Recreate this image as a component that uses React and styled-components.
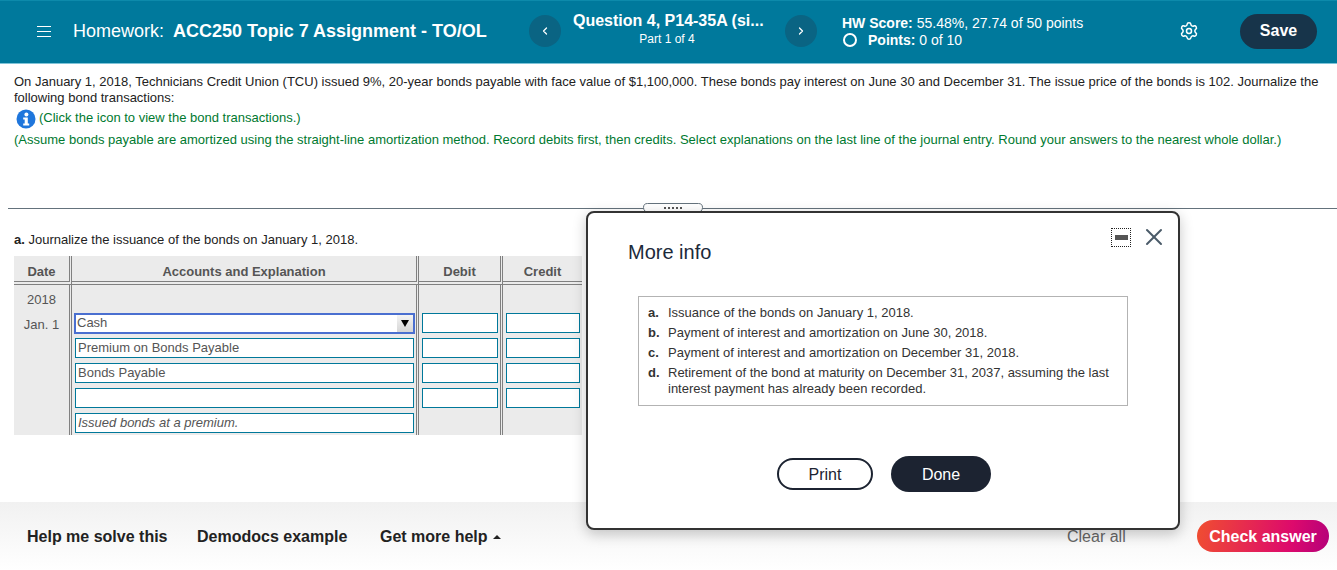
import React from "react";
import styled, { createGlobalStyle } from "styled-components";
import { Settings, X, ChevronLeft, ChevronRight } from "lucide-react";

const GlobalStyle = createGlobalStyle`
  html, body {
    margin: 0;
    padding: 0;
    background: #fff;
    font-family: "Liberation Sans", Arial, sans-serif;
    font-size: 13px;
    color: #222;
  }
`;

const Page = styled.div`
  position: relative;
  width: 1337px;
  height: 570px;
  overflow: hidden;
  display: flex;
  flex-direction: column;
`;

const Header = styled.header`
  flex: none;
  height: 60px;
  padding-bottom: 2px;
  border-top: 1px solid #0d8aab;
  border-bottom: 1px solid #7fc4d8;
  background: #00799c;
  color: #fff;
  display: flex;
  align-items: center;
`;

const Burger = styled.span`
  flex: none;
  width: 14px;
  height: 11px;
  margin-left: 37px;
  border-top: 1px solid #fff;
  border-bottom: 1px solid #fff;
  box-sizing: border-box;
  position: relative;
  &::after {
    content: "";
    position: absolute;
    left: 0;
    right: 0;
    top: 4px;
    height: 1px;
    background: #fff;
  }
`;

const Title = styled.div`
  flex: none;
  width: 456px;
  margin-left: 22px;
  font-size: 18px;
  white-space: nowrap;
  b {
    margin-left: 4px;
  }
`;

const RoundNav = styled.button`
  flex: none;
  width: 32px;
  height: 32px;
  padding: 0;
  border: 0;
  border-radius: 50%;
  background: #0a6483;
  color: #fff;
  display: flex;
  align-items: center;
  justify-content: center;
`;

const QuestionInfo = styled.div`
  flex: none;
  width: 224px;
  box-sizing: border-box;
  padding-right: 12px;
  text-align: center;
  margin-top: -5px;
  strong {
    display: block;
    width: 190px;
    margin: 0 auto 1px 12px;
    font-size: 16px;
    line-height: 20px;
    white-space: nowrap;
  }
  span {
    display: block;
    font-size: 12px;
    line-height: 14px;
  }
`;

const ScoreBlock = styled.div`
  flex: none;
  width: 337px;
  margin: 1px 0 0 25px;
  font-size: 14px;
  line-height: 18px;
`;

const ScoreLine = styled.div`
  margin-bottom: -1px;
`;

const PointsLine = styled.div`
  display: flex;
  align-items: center;
`;

const PointsRing = styled.span`
  flex: none;
  width: 14px;
  height: 14px;
  margin: 0 11px 0 1px;
  border: 2px solid #fff;
  border-radius: 50%;
  box-sizing: border-box;
`;

const GearButton = styled.span`
  flex: none;
  width: 20px;
  display: flex;
  justify-content: center;
`;

const SaveButton = styled.button`
  flex: none;
  margin-left: 41px;
  width: 77px;
  height: 35px;
  border: 0;
  border-radius: 18px;
  background: #17344a;
  color: #fff;
  font: bold 16px "Liberation Sans", Arial, sans-serif;
`;

const Question = styled.section`
  flex: none;
  height: 144px;
  padding: 10px 14px 0;
  box-sizing: border-box;
  font-size: 13px;
  line-height: 16px;
`;

const Statement = styled.p`
  margin: 0;
  width: 1310px;
`;

const Hint = styled.div`
  display: flex;
  align-items: center;
  height: 18px;
  margin-top: 3px;
  color: #00792f;
  svg {
    margin: 1px 3px 0 2px;
    flex: none;
  }
`;

const Assume = styled.p`
  margin: 5px 0 0;
  color: #00792f;
  letter-spacing: 0.01px;
  white-space: nowrap;
`;

const Divider = styled.div`
  flex: none;
  height: 1px;
  margin-left: 8px;
  background: #64727c;
`;

const Handle = styled.div`
  position: absolute;
  left: 643px;
  top: 203px;
  width: 60px;
  height: 10px;
  box-sizing: border-box;
  border: 1px solid #64727c;
  border-radius: 5px 5px 6px 6px;
  background: #fff;
  display: flex;
  align-items: center;
  justify-content: center;
  gap: 2px;
  i {
    width: 2px;
    height: 2px;
    background: #555;
  }
`;

const Work = styled.section`
  flex: 1;
  padding: 23px 14px 0;
`;

const PartLabel = styled.p`
  margin: 0 0 8px;
  line-height: 16px;
  color: #222;
`;

const Journal = styled.table`
  width: 568px;
  table-layout: fixed;
  border-collapse: separate;
  border-spacing: 0;
  background: #ebebeb;
  color: #555;
`;

const HeadCell = styled.th`
  height: 20px;
  padding: 5px 0 0;
  font-size: 13px;
  font-weight: bold;
  color: #555;
  text-align: center;
  border-bottom: 4px double #808080;
  border-right: ${(p) => (p.$last ? "0" : "3px double #808080")};
`;

const Cell = styled.td`
  height: ${(p) => p.$h || 25}px;
  padding: 0;
  box-sizing: border-box;
  vertical-align: top;
  border-right: ${(p) => (p.$last ? "0" : "3px double #808080")};
`;

const DateText = styled.div`
  padding-top: ${(p) => p.$top}px;
  line-height: 16px;
  text-align: center;
  color: #555;
`;

const Field = styled.div`
  height: 20px;
  box-sizing: border-box;
  margin: 2px 2px 0 ${(p) => p.$left}px;
  width: ${(p) => p.$w}px;
  border: 1px solid #00789a;
  background: #fff;
  padding-left: 2px;
  line-height: 17px;
  font-size: 13px;
  color: #555;
  font-style: ${(p) => (p.$note ? "italic" : "normal")};
  white-space: nowrap;
`;

const SelectField = styled.div`
  height: 21px;
  width: 341px;
  margin: 2px 0 0 2px;
  box-sizing: border-box;
  border: 2px solid #4a6fd0;
  background: #fff;
  padding-left: 1px;
  line-height: 16px;
  color: #555;
  display: flex;
  justify-content: space-between;
`;

const SelectArrow = styled.span`
  width: 16px;
  height: 17px;
  background: linear-gradient(#f4f4f4, #d6d6d6);
  display: flex;
  align-items: center;
  justify-content: center;
  &::after {
    content: "";
    border-left: 4px solid transparent;
    border-right: 4px solid transparent;
    border-top: 7px solid #000;
  }
`;

const Footer = styled.footer`
  flex: none;
  height: 68px;
  background: linear-gradient(#f1f1f1, #fff);
  display: flex;
  align-items: center;
  font-size: 16px;
  font-weight: bold;
  color: #222;
`;

const FooterLink = styled.span`
  flex: none;
  width: ${(p) => p.$w}px;
  margin: 2px 0 0 ${(p) => p.$ml || 0}px;
  display: flex;
  align-items: center;
  white-space: nowrap;
`;

const Caret = styled.span`
  margin-left: 5px;
  border-left: 4px solid transparent;
  border-right: 4px solid transparent;
  border-bottom: 4px solid #222;
`;

const ClearAll = styled.span`
  flex: none;
  width: 130px;
  margin: 2px 0 0 567px;
  font-weight: normal;
  color: #666;
`;

const CheckAnswer = styled.button`
  flex: none;
  width: 132px;
  height: 32px;
  padding: 1px 0 0;
  border: 0;
  border-radius: 16px;
  background: linear-gradient(100deg, #f04e30, #dd0a6c 70%, #b4007a);
  color: #fff;
  font: bold 16px "Liberation Sans", Arial, sans-serif;
`;

const Modal = styled.div`
  position: absolute;
  left: 586px;
  top: 211px;
  width: 594px;
  height: 319px;
  box-sizing: border-box;
  padding: 27px 40px 0;
  background: #fff;
  border: 2px solid #333;
  border-radius: 8px;
  box-shadow: 0 4px 14px rgba(0, 0, 0, 0.22);
`;

const ModalTitle = styled.h2`
  margin: 0 0 32px;
  font-size: 20px;
  line-height: 24px;
  font-weight: normal;
  color: #1c2a3a;
`;

const ModalControls = styled.div`
  position: absolute;
  top: 10px;
  right: 10px;
  display: flex;
  align-items: center;
  gap: 9px;
  color: #4a5a68;
`;

const Minimize = styled.span`
  width: 20px;
  height: 19px;
  box-sizing: border-box;
  border: 1px dotted #222;
  display: flex;
  align-items: center;
  justify-content: center;
  &::after {
    content: "";
    width: 13px;
    height: 5px;
    background: #555;
  }
`;

const InfoBox = styled.ol`
  list-style: none;
  margin: 0 0 0 10px;
  width: 490px;
  height: 110px;
  box-sizing: border-box;
  padding: 8px 9px 0;
  border: 1px solid #b3b3b3;
  font-size: 13px;
  line-height: 16px;
  color: #333;
`;

const InfoItem = styled.li`
  display: flex;
  margin-bottom: 4px;
  b {
    flex: none;
    width: 20px;
  }
`;

const ModalActions = styled.div`
  display: flex;
  align-items: center;
  gap: 18px;
  margin: 50px 0 0 149px;
`;

const PrintButton = styled.button`
  width: 96px;
  height: 32px;
  padding: 1px 0 0;
  border: 2px solid #1c2331;
  border-radius: 16px;
  background: #fff;
  color: #1c2331;
  font: 16px "Liberation Sans", Arial, sans-serif;
`;

const DoneButton = styled.button`
  width: 100px;
  height: 36px;
  padding: 1px 0 0;
  border: 0;
  border-radius: 18px;
  background: #1c2331;
  color: #fff;
  font: 16px "Liberation Sans", Arial, sans-serif;
`;

const InfoIcon = () => (
  <svg width="20" height="20" viewBox="0 0 20 20" aria-hidden="true">
    <circle cx="10" cy="10" r="9.5" fill="#1f76dc" />
    <circle cx="10.4" cy="5.4" r="2" fill="#fff" />
    <path d="M7.2 8.6h4.6v6h1.4v1.9H7.2v-1.9h1.5v-4.1H7.2z" fill="#fff" />
  </svg>
);

const rows = [
  { id: "premium", text: "Premium on Bonds Payable" },
  { id: "bonds", text: "Bonds Payable" },
  { id: "blank", text: "" },
];

const items = [
  ["a.", "Issuance of the bonds on January 1, 2018."],
  ["b.", "Payment of interest and amortization on June 30, 2018."],
  ["c.", "Payment of interest and amortization on December 31, 2018."],
  ["d.", "Retirement of the bond at maturity on December 31, 2037, assuming the last interest payment has already been recorded."],
];

export default function App() {
  return (
    <Page>
      <GlobalStyle />
      <Header>
        <Burger />
        <Title>
          Homework: <b>ACC250 Topic 7 Assignment - TO/OL</b>
        </Title>
        <RoundNav>
          <ChevronLeft size={12} strokeWidth={2.5} />
        </RoundNav>
        <QuestionInfo>
          <strong>Question 4, P14-35A (si...</strong>
          <span>Part 1 of 4</span>
        </QuestionInfo>
        <RoundNav>
          <ChevronRight size={12} strokeWidth={2.5} />
        </RoundNav>
        <ScoreBlock>
          <ScoreLine>
            <b>HW Score:</b> 55.48%, 27.74 of 50 points
          </ScoreLine>
          <PointsLine>
            <PointsRing />
            <span>
              <b>Points:</b> 0 of 10
            </span>
          </PointsLine>
        </ScoreBlock>
        <GearButton>
          <Settings size={20} strokeWidth={1.8} />
        </GearButton>
        <SaveButton>Save</SaveButton>
      </Header>

      <Question>
        <Statement>
          On January 1, 2018, Technicians Credit Union (TCU) issued 9%, 20-year bonds payable with face value of
          $1,100,000. These bonds pay interest on June 30 and December 31. The issue price of the bonds is 102. Journalize
          the following bond transactions:
        </Statement>
        <Hint>
          <InfoIcon />
          (Click the icon to view the bond transactions.)
        </Hint>
        <Assume>
          (Assume bonds payable are amortized using the straight-line amortization method. Record debits first, then
          credits. Select explanations on the last line of the journal entry. Round your answers to the nearest whole
          dollar.)
        </Assume>
      </Question>

      <Divider />
      <Handle>
        <i />
        <i />
        <i />
        <i />
        <i />
      </Handle>

      <Work>
        <PartLabel>
          <b>a.</b> Journalize the issuance of the bonds on January 1, 2018.
        </PartLabel>
        <Journal>
          <colgroup>
            <col width="58" />
            <col width="347" />
            <col width="84" />
            <col width="79" />
          </colgroup>
          <thead>
            <tr>
              <HeadCell>Date</HeadCell>
              <HeadCell>Accounts and Explanation</HeadCell>
              <HeadCell>Debit</HeadCell>
              <HeadCell $last>Credit</HeadCell>
            </tr>
          </thead>
          <tbody>
            <tr>
              <Cell $h={26}>
                <DateText $top={7}>2018</DateText>
              </Cell>
              <Cell $h={26} />
              <Cell $h={26} />
              <Cell $h={26} $last />
            </tr>
            <tr>
              <Cell>
                <DateText $top={6}>Jan. 1</DateText>
              </Cell>
              <Cell>
                <SelectField>
                  Cash
                  <SelectArrow />
                </SelectField>
              </Cell>
              <Cell>
                <Field $left={3} $w={76} />
              </Cell>
              <Cell $last>
                <Field $left={3} $w={74} />
              </Cell>
            </tr>
            {rows.map((row) => (
              <tr key={row.id}>
                <Cell />
                <Cell>
                  <Field $left={3} $w={339}>
                    {row.text}
                  </Field>
                </Cell>
                <Cell>
                  <Field $left={3} $w={76} />
                </Cell>
                <Cell $last>
                  <Field $left={3} $w={74} />
                </Cell>
              </tr>
            ))}
            <tr>
              <Cell $h={24} />
              <Cell $h={24}>
                <Field $left={3} $w={339} $note>
                  Issued bonds at a premium.
                </Field>
              </Cell>
              <Cell $h={24} />
              <Cell $h={24} $last />
            </tr>
          </tbody>
        </Journal>
      </Work>

      <Footer>
        <FooterLink $ml={27} $w={170}>Help me solve this</FooterLink>
        <FooterLink $w={183}>Demodocs example</FooterLink>
        <FooterLink $w={120}>
          Get more help
          <Caret />
        </FooterLink>
        <ClearAll>Clear all</ClearAll>
        <CheckAnswer>Check answer</CheckAnswer>
      </Footer>

      <Modal>
        <ModalControls>
          <Minimize />
          <X size={28} strokeWidth={1.7} />
        </ModalControls>
        <ModalTitle>More info</ModalTitle>
        <InfoBox>
          {items.map(([label, text]) => (
            <InfoItem key={label}>
              <b>{label}</b>
              <span>{text}</span>
            </InfoItem>
          ))}
        </InfoBox>
        <ModalActions>
          <PrintButton>Print</PrintButton>
          <DoneButton>Done</DoneButton>
        </ModalActions>
      </Modal>
    </Page>
  );
}
